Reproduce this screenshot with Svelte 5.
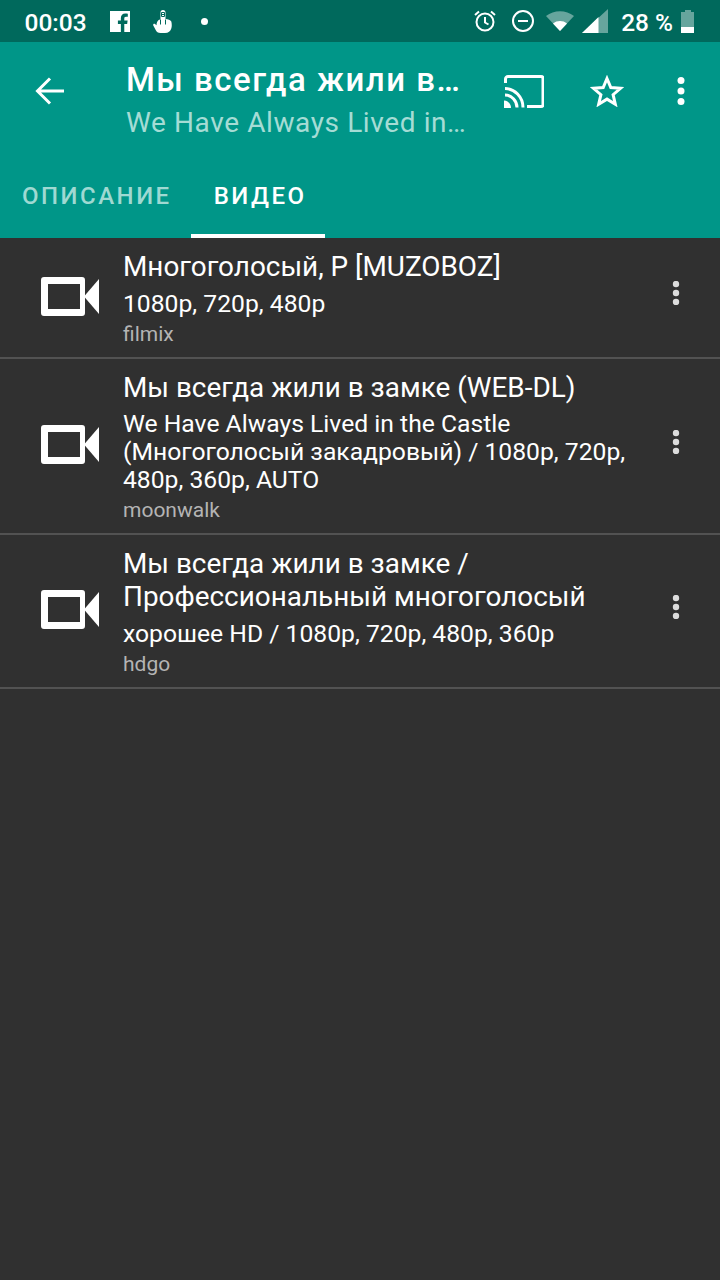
<script>
  const videos = [
    { title: 'Многоголосый, Р [MUZOBOZ]', info: '1080p, 720p, 480p', source: 'filmix' },
    { title: 'Мы всегда жили в замке (WEB-DL)', info: 'We Have Always Lived in the Castle (Многоголосый закадровый) / 1080p, 720p, 480p, 360p, AUTO', source: 'moonwalk' },
    { title: 'Мы всегда жили в замке / Профессиональный многоголосый', info: 'хорошее HD / 1080p, 720p, 480p, 360p', source: 'hdgo' }
  ];
</script>

<div class="page">
  <div class="status">
    <span class="time">00:03</span>
    <svg class="s-fb" width="20" height="21" viewBox="0 0 21 21" preserveAspectRatio="none"><path fill="#fff" d="M0 0h21v21h-6v-8h3l.5-3.400H15V7.500c0-1 .4-1.700 1.800-1.700h1.900V2.700c-.9-.1-1.800-.2-2.700-.2-2.800 0-4.600 1.700-4.600 4.700v2.400H8.300V13h3.100v8H0z"/></svg>
    <svg class="s-hand" width="19" height="23" viewBox="0 0 19 23"><path fill="#fff" d="M7.500 2.800C7.500 1 8.300 0 10 0s2.500 1 2.500 2.800V9c2.500.3 5 1.200 5.800 2.500.6 2.500.7 5-.1 7.300C17.300 21.500 15.500 23 12 23H7.500C5 23 3.500 21.800 2.700 20L.3 15.500c-.6-1.200.7-2.200 1.700-1.500l1.500 1.300c0-3 1-5.300 4-6z"/><path fill="none" stroke="#00695c" stroke-width="1" d="M8.500 4.500h3M8.500 2.500h3v4h-3zM7.500 9.500v5M12.500 9.500v5"/></svg>
    <span class="dot"></span>
    <span class="spacer"></span>
    <svg class="s-alarm" width="24" height="24" viewBox="0 0 24 24" fill="none" stroke="#fff" stroke-width="2"><circle cx="12" cy="13" r="8.500"/><path d="M12 8v5.500l3.500 2M2 6l4-3.500M22 6l-4-3.500"/></svg>
    <svg class="s-dnd" width="24" height="24" viewBox="0 0 24 24" fill="none" stroke="#fff" stroke-width="2"><circle cx="12" cy="12" r="10"/><path d="M7 12h10"/></svg>
    <svg class="s-wifi" width="28" height="20" viewBox="0 0 28 20"><path fill="#fff" opacity=".4" d="M0 5c8-6.500 20-6.500 28 0L14 20z"/><path fill="#fff" d="M7 12.500c4-3.300 10-3.300 14 0L14 20z"/></svg>
    <svg class="s-signal" width="26" height="24" viewBox="0 0 26 24"><path fill="#fff" opacity=".4" d="M26 0v24H0z"/><path fill="#fff" d="M16.500 8v16H0z"/></svg>
    <span class="batt-text">28 %</span>
    <span class="battery"><span class="cap"></span><span class="cell"><span class="charge"></span></span></span>
  </div>

  <header>
    <div class="toolbar">
      <svg class="back" width="32" height="32" viewBox="0 0 32 32" fill="none" stroke="#fff" stroke-width="3"><path d="M30 16H4M16 3.500 3.500 16 16 28.500"/></svg>
      <div class="titles">
        <div class="title">Мы всегда жили в…</div>
        <div class="subtitle">We Have Always Lived in…</div>
      </div>
      <svg class="cast" width="40" height="33" viewBox="0 0 40 33" fill="none" stroke="#fff" stroke-width="3"><path d="M1.500 8V4a2.500 2.500 0 0 1 2.500-2.500h33a2 2 0 0 1 2 2v26a2 2 0 0 1-2 2H23"/><path d="M1 13.500c9.500 0 18 8.500 18 19M1 20c6.500 0 12 6 12 12.500"/><path fill="#fff" stroke="none" d="M0 25.500c4 0 7 3.500 7 7.500H0z"/></svg>
      <svg class="star" width="34" height="32" viewBox="0 0 34 32" fill="none" stroke="#fff" stroke-width="3"><path d="M17 3.500 20.800 12.500 30.500 13.300 23.100 19.700 25.300 29.200 17 24.100 8.700 29.200 10.900 19.700 3.500 13.300 13.200 12.500z"/></svg>
      <svg class="more" width="8" height="28" viewBox="0 0 8 28" fill="#fff"><circle cx="4" cy="3.500" r="3.500"/><circle cx="4" cy="14" r="3.500"/><circle cx="4" cy="24.500" r="3.500"/></svg>
    </div>
    <div class="tabs">
      <div class="tab">ОПИСАНИЕ</div>
      <div class="tab active">ВИДЕО</div>
    </div>
  </header>

  <main>
    {#each videos as v}
      <div class="row">
        <svg class="cam" width="58" height="39" viewBox="0 0 58 39"><path fill="#fff" fill-rule="evenodd" d="M3 0h38a3 3 0 0 1 3 3v33a3 3 0 0 1-3 3H3a3 3 0 0 1-3-3V3a3 3 0 0 1 3-3zM7 7v25h32V7z"/><path fill="#fff" d="M43 19.500 58 2v35z"/></svg>
        <div class="text">
          <div class="name">{v.title}</div>
          <div class="info">{v.info}</div>
          <div class="source">{v.source}</div>
        </div>
        <svg class="row-more" width="8" height="24" viewBox="0 0 8 24" fill="#dcdcdc"><circle cx="4" cy="3" r="3.200"/><circle cx="4" cy="12" r="3.200"/><circle cx="4" cy="21" r="3.200"/></svg>
      </div>
    {/each}
  </main>
</div>

<style>
  :global(body) {
    margin: 0;
    background: #303030;
  }

  .page {
    width: 720px;
    height: 1280px;
    overflow: hidden;
    background: #303030;
    font-family: Roboto, sans-serif;
    color: #fff;
  }

  .status {
    height: 42px;
    background: #00695c;
    display: flex;
    align-items: center;
    padding: 0 26px 0 24.500px;
    box-sizing: border-box;
  }
  .time {
    font-size: 24.500px;
    font-weight: 500;
    width: 85.500px;
    margin-top: 2px;
  }
  .s-hand { margin-left: 23px; }
  .dot {
    width: 7px;
    height: 7px;
    border-radius: 50%;
    background: #fff;
    margin-left: 29px;
  }
  .spacer { flex: 1; }
  .s-dnd { margin-left: 14px; }
  .s-wifi { margin-left: 11px; }
  .s-signal { margin-left: 8px; }
  .batt-text {
    font-size: 24.400px;
    font-weight: 500;
    margin-left: 13px;
    margin-top: 2px;
  }
  .battery {
    width: 13px;
    height: 23px;
    margin-left: 8px;
    display: flex;
    flex-direction: column;
    align-items: center;
  }
  .cap {
    width: 6px;
    height: 2px;
    background: rgba(255, 255, 255, 0.4);
  }
  .cell {
    flex: 1;
    width: 13px;
    background: rgba(255, 255, 255, 0.4);
    display: flex;
    align-items: flex-end;
  }
  .charge {
    width: 100%;
    height: 6px;
    background: #fff;
  }

  header {
    height: 196px;
    background: #009688;
    display: flex;
    flex-direction: column;
  }
  .toolbar {
    height: 98px;
    margin-bottom: 14px;
    display: flex;
    align-items: center;
    padding: 0 36px 0 34px;
  }
  .back { flex: none; }
  .titles {
    width: 340px;
    margin-left: 60px;
    margin-top: 18px;
    align-self: flex-start;
    flex: none;
  }
  .title, .subtitle {
    white-space: nowrap;
  }
  .title {
    font-size: 33px;
    font-weight: 500;
    line-height: 40px;
    letter-spacing: 1.500px;
  }
  .subtitle {
    font-size: 28px;
    line-height: 36px;
    margin-top: 5px;
    color: #a5dcd5;
    letter-spacing: 0.600px;
  }
  .cast { margin-left: 38px; flex: none; }
  .star { margin-left: 46px; flex: none; }
  .more { margin-left: 53px; flex: none; }

  .tabs {
    display: flex;
    height: 84px;
  }
  .tab {
    padding: 0 19px 0 22px;
    box-sizing: border-box;
    height: 84px;
    line-height: 85px;
    font-size: 24px;
    font-weight: 500;
    letter-spacing: 2.500px;
    color: #9fd9d2;
  }
  .active {
    color: #fff;
    padding: 0 18.500px 0 23px;
    border-bottom: 4px solid #fff;
  }

  .row {
    display: flex;
    align-items: center;
    border-bottom: 2px solid #525252;
    padding: 12px 0 9px 0;
    box-sizing: border-box;
  }
  .cam { flex: none; margin-left: 41px; margin-bottom: 5px; }
  .text {
    flex: none;
    width: 510px;
    margin-left: 24px;
  }
  .name {
    font-size: 27.900px;
    line-height: 33px;
  }
  .info {
    font-size: 24.700px;
    line-height: 28px;
    margin-top: 6.500px;
  }
  .source {
    font-size: 21px;
    line-height: 28px;
    color: #b4b4b4;
    margin-top: 2px;
  }
  .row-more { flex: none; margin-left: 39px; margin-bottom: 11px; }
</style>
